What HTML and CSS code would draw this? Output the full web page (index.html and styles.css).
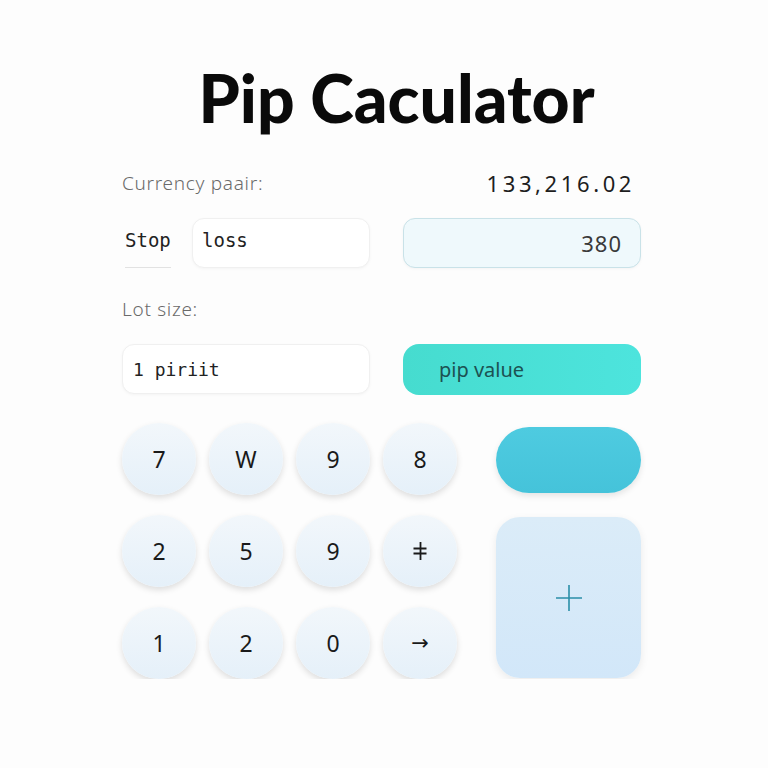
FILE: index.html
```html
<!DOCTYPE html>
<html lang="en">
<head>
    <meta charset="UTF-8">
    <meta name="viewport" content="width=device-width, initial-scale=1.0">
    <title>Pip Caculator</title>
    <link rel="stylesheet" href="styles.css">
</head>
<body>
    <main id="calc">
        <h1>Pip Caculator</h1>

        <div class="row row-label">
            <span class="label">Currency paair:</span>
            <span class="rate">133,216.02</span>
        </div>

        <div class="row row-field">
            <div class="field-left">
                <span class="stop">Stop</span>
                <div class="input input-loss">loss</div>
            </div>
            <div class="input input-result">380</div>
        </div>

        <div class="row row-label lot">
            <span class="label">Lot size:</span>
        </div>

        <div class="row row-field">
            <div class="input input-lot">1 piriit</div>
            <button class="pip-btn">pip value</button>
        </div>

        <div class="pad">
            <div class="keys">
                <button class="key">7</button>
                <button class="key">W</button>
                <button class="key">9</button>
                <button class="key">8</button>
                <button class="key">2</button>
                <button class="key">5</button>
                <button class="key">9</button>
                <button class="key" aria-label="not parallel">
                    <svg width="16" height="20" viewBox="0 0 16 20">
                        <path d="M8.5 1 V19 M1.5 7.5 H14.5 M1.5 12.5 H14.5" stroke="#1a1a1a" stroke-width="1.8" fill="none"/>
                    </svg>
                </button>
                <button class="key">1</button>
                <button class="key">2</button>
                <button class="key">0</button>
                <button class="key sym">&rarr;</button>
            </div>
            <div class="side">
                <button class="pill"></button>
                <button class="plus-btn">
                    <svg width="30" height="30" viewBox="0 0 30 30">
                        <path d="M15 2 V28 M2 15 H28" stroke="#2b8fa8" stroke-width="1.6" fill="none"/>
                    </svg>
                </button>
            </div>
        </div>
    </main>
</body>
</html>
```

FILE: styles.css
```css
body {
    margin: 0;
    background: #fdfdfd;
    font-family: "Noto Sans", Arial, sans-serif;
    color: #222;
}
#calc {
    width: 519px;
    margin: 0 0 0 122px;
    padding-top: 62px;
}
h1 {
    font-family: Lato, "Noto Sans", sans-serif;
    font-weight: 900;
    font-size: 66px;
    line-height: 72px;
    margin: 0 0 0 30px;
    text-align: center;
    color: #0a0a0a;
}
.row {
    display: flex;
    justify-content: space-between;
    align-items: center;
}
.row-label {
    margin-top: 33px;
    height: 32px;
}
.row-label.lot {
    margin-top: 25px;
}
.label {
    font-size: 19px;
    font-weight: 300;
    color: #6a6a6a;
    letter-spacing: 0.7px;
}
.rate {
    font-size: 22px;
    color: #1e1e1e;
    letter-spacing: 3.6px;
    margin-right: 6px;
}
.row-field {
    margin-top: 19px;
    height: 50px;
}
.field-left {
    display: flex;
    align-items: center;
    width: 248px;
    height: 50px;
}
.stop {
    font-family: "DejaVu Sans Mono", monospace;
    font-size: 19px;
    color: #222;
    width: 46px;
    margin-left: 3px;
    height: 50px;
    line-height: 44px;
    border-bottom: 1px solid #e2e2e2;
    box-sizing: border-box;
}
.input {
    box-sizing: border-box;
    height: 50px;
    border-radius: 12px;
    background: #fff;
    border: 1px solid #f0f0f0;
    box-shadow: 0 1px 3px rgba(0, 0, 0, 0.04);
    display: flex;
    align-items: center;
    font-family: "DejaVu Sans Mono", monospace;
    font-size: 19px;
    color: #222;
}
.input-loss {
    margin-left: 21px;
    flex: 1;
    padding-left: 9px;
    padding-bottom: 6px;
}
.input-result {
    width: 238px;
    background: #eff9fc;
    border: 1px solid #c9e2e8;
    justify-content: flex-end;
    padding-right: 18px;
    font-family: "Noto Sans", sans-serif;
    font-size: 22px;
    color: #3a3a3a;
    letter-spacing: 1px;
}
.input-lot {
    width: 248px;
    padding-left: 10px;
    font-size: 18px;
}
button {
    font-family: inherit;
    border: none;
    cursor: pointer;
}
.pip-btn {
    width: 238px;
    height: 51px;
    border-radius: 16px;
    background: linear-gradient(90deg, #46dccf, #4de4dd);
    color: #1c5252;
    font-size: 20px;
    text-align: left;
    padding-left: 36px;
}
.pad {
    display: flex;
    justify-content: space-between;
    margin-top: 29px;
}
.keys {
    display: grid;
    grid-template-columns: repeat(4, 74px);
    grid-auto-rows: 72px;
    column-gap: 13px;
    row-gap: 20px;
}
.key {
    width: 74px;
    height: 72px;
    border-radius: 50%;
    background: linear-gradient(180deg, #f2f7fb, #e5f0f9);
    box-shadow: 0 3px 6px rgba(0, 0, 0, 0.13);
    font-family: "Noto Sans", sans-serif;
    font-size: 23px;
    color: #1a1a1a;
    display: flex;
    align-items: center;
    justify-content: center;
    padding: 0;
}
.key.sym {
    font-family: "DejaVu Sans", sans-serif;
    font-size: 21px;
}
.side {
    display: flex;
    flex-direction: column;
    width: 145px;
    padding-top: 4px;
}
.pill {
    height: 66px;
    border-radius: 33px;
    background: linear-gradient(180deg, #4ecbe0, #45c3da);
    box-shadow: 0 3px 6px rgba(0, 0, 0, 0.1);
}
.plus-btn {
    margin-top: 24px;
    height: 161px;
    border-radius: 24px;
    background: linear-gradient(180deg, #dbecf8, #d2e7f9);
    box-shadow: 0 3px 8px rgba(0, 0, 0, 0.08);
    display: flex;
    align-items: center;
    justify-content: center;
}
```
